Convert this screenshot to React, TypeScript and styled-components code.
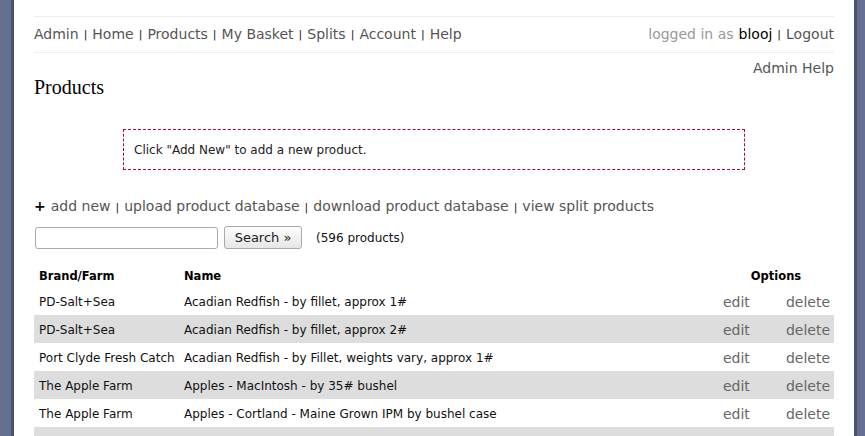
import * as React from 'react'
import styled, { createGlobalStyle } from 'styled-components'

const GlobalStyle = createGlobalStyle`
    html, body {
        margin: 0;
        padding: 0;
        background: #65708e;
        font-family: "DejaVu Sans", Verdana, sans-serif;
    }
`

const Page = styled.div`
    margin-left: 11px;
    width: 800px;
    min-height: 436px;
    background: #fff;
    border-left: 3px solid #4a5270;
    border-right: 3px solid #4a5270;
    padding: 16px 20px 0;
    box-sizing: content-box;
`

const TopBar = styled.div`
    display: flex;
    justify-content: space-between;
    align-items: center;
    box-sizing: border-box;
    height: 37px;
    padding-bottom: 2px;
    border-top: 1px solid #eee;
    border-bottom: 1px solid #eee;
    font-size: 14px;
`

const Nav = styled.div`
    display: flex;
    align-items: center;
`

const NavLink = styled.a`
    color: #555;
    text-decoration: none;
`

const Pipe = styled.span`
    color: #222;
    font-size: 11px;
    margin: 0 5px;
    position: relative;
    top: 1px;
`

const Muted = styled.span`
    color: #999;
`

const User = styled.span`
    color: #000;
    margin-left: 5px;
`

const HelpRow = styled.div`
    display: flex;
    justify-content: flex-end;
    margin-top: 7px;
    font-size: 14px;
`

const Title = styled.h2`
    font-family: "Liberation Serif", "Times New Roman", serif;
    font-weight: normal;
    font-size: 20px;
    color: #000;
    margin: 0;
`

const Notice = styled.div`
    width: 600px;
    height: 39px;
    margin: 30px auto 0;
    padding: 0 10px;
    display: flex;
    align-items: center;
    border: 1px dashed #a0102a;
    font-size: 12px;
    color: #222;
`

const Actions = styled.div`
    margin-top: 28px;
    font-size: 14px;
    display: flex;
    align-items: center;
`

const Plus = styled.span`
    color: #000;
    font-weight: bold;
    margin-right: 5px;
`

const SearchRow = styled.div`
    display: flex;
    align-items: center;
    margin-top: 12px;
`

const SearchInput = styled.input`
    width: 177px;
    height: 18px;
    margin: 0 0 0 1px;
    padding: 1px 2px;
    border: 1px solid #aaa;
    border-radius: 3px;
    font-size: 13px;
    box-sizing: content-box;
`

const SearchButton = styled.button`
    margin-left: 6px;
    height: 23px;
    width: 78px;
    padding: 0;
    font-family: "DejaVu Sans", Verdana, sans-serif;
    font-size: 13px;
    color: #222;
    border: 1px solid #aaa;
    border-radius: 3px;
    background: linear-gradient(#fdfdfd, #e6e6e6);
`

const Count = styled.span`
    margin-left: 14px;
    font-size: 12px;
    color: #111;
`

const Table = styled.table`
    width: 800px;
    margin-top: 14px;
    border-collapse: collapse;
    table-layout: fixed;
    font-size: 12px;
    color: #111;
`

const Th = styled.th<{ $center?: boolean }>`
    text-align: ${p => (p.$center ? 'center' : 'left')};
    font-weight: bold;
    font-size: 11.5px;
    padding: 5px 5px 4px;
    height: 15px;
    color: #000;
`

const Row = styled.tr<{ $shade: boolean }>`
    background: ${p => (p.$shade ? '#dddddd' : '#fff')};
`

const Td = styled.td`
    padding: 2px 5px 0;
    height: 26px;
    white-space: nowrap;
    overflow: hidden;
`

const OptTd = styled(Td)`
    font-size: 14px;
    color: #666;
`

const products = [
    ['PD-Salt+Sea', 'Acadian Redfish - by fillet, approx 1#'],
    ['PD-Salt+Sea', 'Acadian Redfish - by fillet, approx 2#'],
    ['Port Clyde Fresh Catch', 'Acadian Redfish - by Fillet, weights vary, approx 1#'],
    ['The Apple Farm', 'Apples - MacIntosh - by 35# bushel'],
    ['The Apple Farm', 'Apples - Cortland - Maine Grown IPM by bushel case'],
    ['The Apple Farm', 'Apples - Honeycrisp - by half bushel'],
]

const navItems = ['Admin', 'Home', 'Products', 'My Basket', 'Splits', 'Account', 'Help']
const actions = ['add new', 'upload product database', 'download product database', 'view split products']

export default function App() {
    return (
        <>
            <GlobalStyle />
            <Page>
                <TopBar>
                    <Nav>
                        {navItems.map((n, i) => (
                            <React.Fragment key={n}>
                                {i > 0 && <Pipe>|</Pipe>}
                                <NavLink href="#">{n}</NavLink>
                            </React.Fragment>
                        ))}
                    </Nav>
                    <Nav>
                        <Muted>logged in as</Muted>
                        <User>blooj</User>
                        <Pipe>|</Pipe>
                        <NavLink href="#">Logout</NavLink>
                    </Nav>
                </TopBar>
                <HelpRow>
                    <NavLink href="#">Admin Help</NavLink>
                </HelpRow>
                <Title>Products</Title>
                <Notice>Click "Add New" to add a new product.</Notice>
                <Actions>
                    <Plus>+</Plus>
                    {actions.map((a, i) => (
                        <React.Fragment key={a}>
                            {i > 0 && <Pipe>|</Pipe>}
                            <NavLink href="#">{a}</NavLink>
                        </React.Fragment>
                    ))}
                </Actions>
                <SearchRow>
                    <SearchInput type="text" />
                    <SearchButton>Search »</SearchButton>
                    <Count>(596 products)</Count>
                </SearchRow>
                <Table>
                    <colgroup>
                        <col style={{ width: 145 }} />
                        <col />
                        <col style={{ width: 63 }} />
                        <col style={{ width: 53 }} />
                    </colgroup>
                    <thead>
                        <tr>
                            <Th>Brand/Farm</Th>
                            <Th>Name</Th>
                            <Th colSpan={2} $center>
                                Options
                            </Th>
                        </tr>
                    </thead>
                    <tbody>
                        {products.map(([brand, name], i) => (
                            <Row key={i} $shade={i % 2 === 1}>
                                <Td>{brand}</Td>
                                <Td>{name}</Td>
                                <OptTd>edit</OptTd>
                                <OptTd>delete</OptTd>
                            </Row>
                        ))}
                    </tbody>
                </Table>
            </Page>
        </>
    )
}
